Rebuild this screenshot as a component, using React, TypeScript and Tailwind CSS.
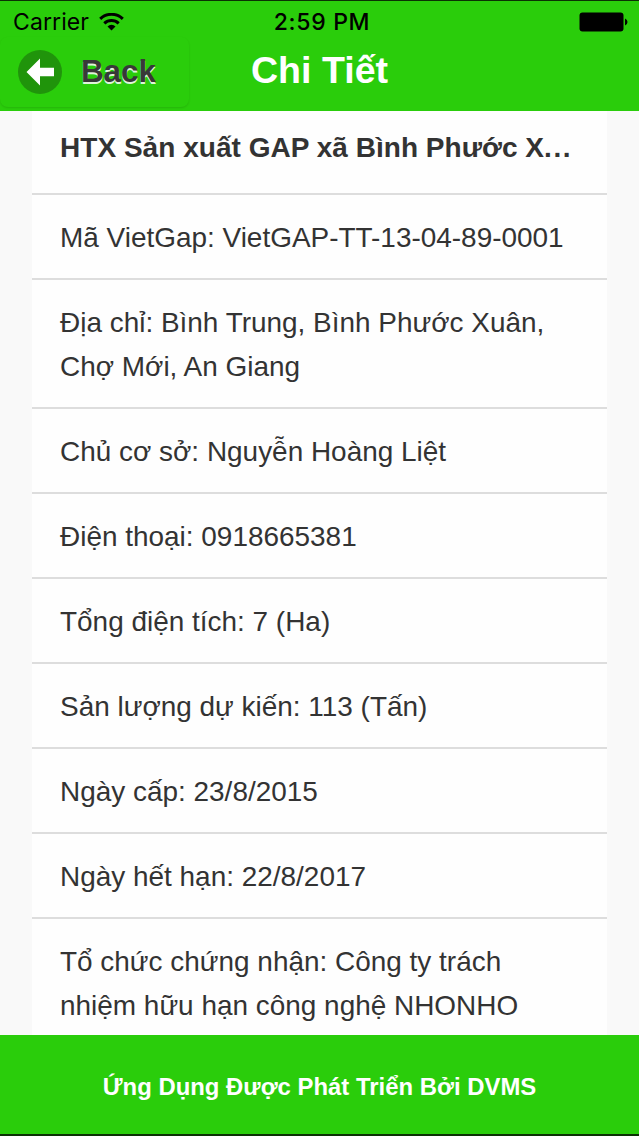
import React from 'react';

const details: string[][] = [
  ['Mã VietGap: VietGAP-TT-13-04-89-0001'],
  ['Địa chỉ: Bình Trung, Bình Phước Xuân,', 'Chợ Mới, An Giang'],
  ['Chủ cơ sở: Nguyễn Hoàng Liệt'],
  ['Điện thoại: 0918665381'],
  ['Tổng điện tích: 7 (Ha)'],
  ['Sản lượng dự kiến: 113 (Tấn)'],
  ['Ngày cấp: 23/8/2015'],
  ['Ngày hết hạn: 22/8/2017'],
  ['Tổ chức chứng nhận: Công ty trách', 'nhiệm hữu hạn công nghệ NHONHO'],
];

const StatusBar: React.FC = () => (
  <div className="grid h-[36px] grid-cols-3 items-center pl-[13px] pr-[11px] pt-[6px] font-[Inter,sans-serif] text-black">
    <div className="flex items-center gap-[10px]">
      <span className="text-[23px] leading-none tracking-[0.1px]">Carrier</span>
      <svg className="h-[18px] w-[25px]" viewBox="0 0 25 18" fill="none" stroke="black" strokeWidth="3">
        <path d="M1.2 5.8a16.5 16.5 0 0 1 22.6 0" />
        <path d="M5.3 10.3a10.5 10.5 0 0 1 14.4 0" />
        <path d="M12.5 17.5l-4-4a5.6 5.6 0 0 1 8 0z" fill="black" stroke="none" />
      </svg>
    </div>
    <span className="pl-[3px] text-center text-[23px] font-medium leading-none tracking-[0.7px]">2:59 PM</span>
    <svg className="h-[20px] w-[49px] justify-self-end" viewBox="0 0 49 20">
      <rect x="0.5" y="0.5" width="44" height="19" rx="3" fill="black" />
      <path d="M46 6.5q2.5 1 2.5 3.5t-2.5 3.5z" fill="black" />
    </svg>
  </div>
);

const Header: React.FC = () => (
  <header className="relative h-[111px] shrink-0 border-t border-[#0b3004] bg-[#2acd0b]">
    <StatusBar />
    <button className="flex h-[70px] w-[189px] items-center gap-[19px] rounded-lg pl-[18px] shadow-[0_1px_2px_rgba(0,0,0,0.12)]">
      <svg className="h-[44px] w-[44px]" viewBox="0 0 44 44">
        <circle cx="22" cy="22" r="22" fill="#20940b" />
        <path d="M8.5 22L22 8.5v9.3h14v8.4H22v9.3z" fill="white" />
      </svg>
      <span className="text-[31.3px] font-bold leading-none text-[#383838] [text-shadow:0_2px_0_#dff5da]">Back</span>
    </button>
    <h1 className="absolute inset-x-0 top-[45px] text-center text-[37.6px] font-bold leading-[48px] text-white">
      Chi Tiết
    </h1>
  </header>
);

const App: React.FC = () => {
  return (
    <div className="flex h-[1136px] w-[639px] flex-col overflow-hidden bg-[#f9f9f9] font-['Liberation_Sans',Arial,sans-serif]">
      <Header />

      <main className="mx-[32px] min-h-0 flex-1 overflow-hidden bg-[#fefefe] text-[27.95px] leading-[44px] text-[#333]">
        <h2 className="h-[84px] whitespace-nowrap border-b-2 border-[#dddddd] px-[28px] pt-[15px] text-[28px] font-bold leading-[43.7px] tracking-[0.03px]">
          HTX Sản xuất GAP xã Bình Phước X<span className="tracking-[1.6px]">...</span>
        </h2>
        {details.map((lines, idx) => (
          <div key={idx} className="border-b-2 border-[#dddddd] px-[28px] pb-[18.53px] pt-[20.5px]">
            {lines.map((line) => (
              <p key={line} className="whitespace-nowrap">{line}</p>
            ))}
          </div>
        ))}
      </main>

      <footer className="flex h-[101px] shrink-0 items-center justify-center border-b-2 border-[#0b3004] bg-[#2acd0b] pt-[4px] text-[23.9px] font-bold text-white">
        Ứng Dụng Được Phát Triển Bởi DVMS
      </footer>
    </div>
  );
};

export default App;
